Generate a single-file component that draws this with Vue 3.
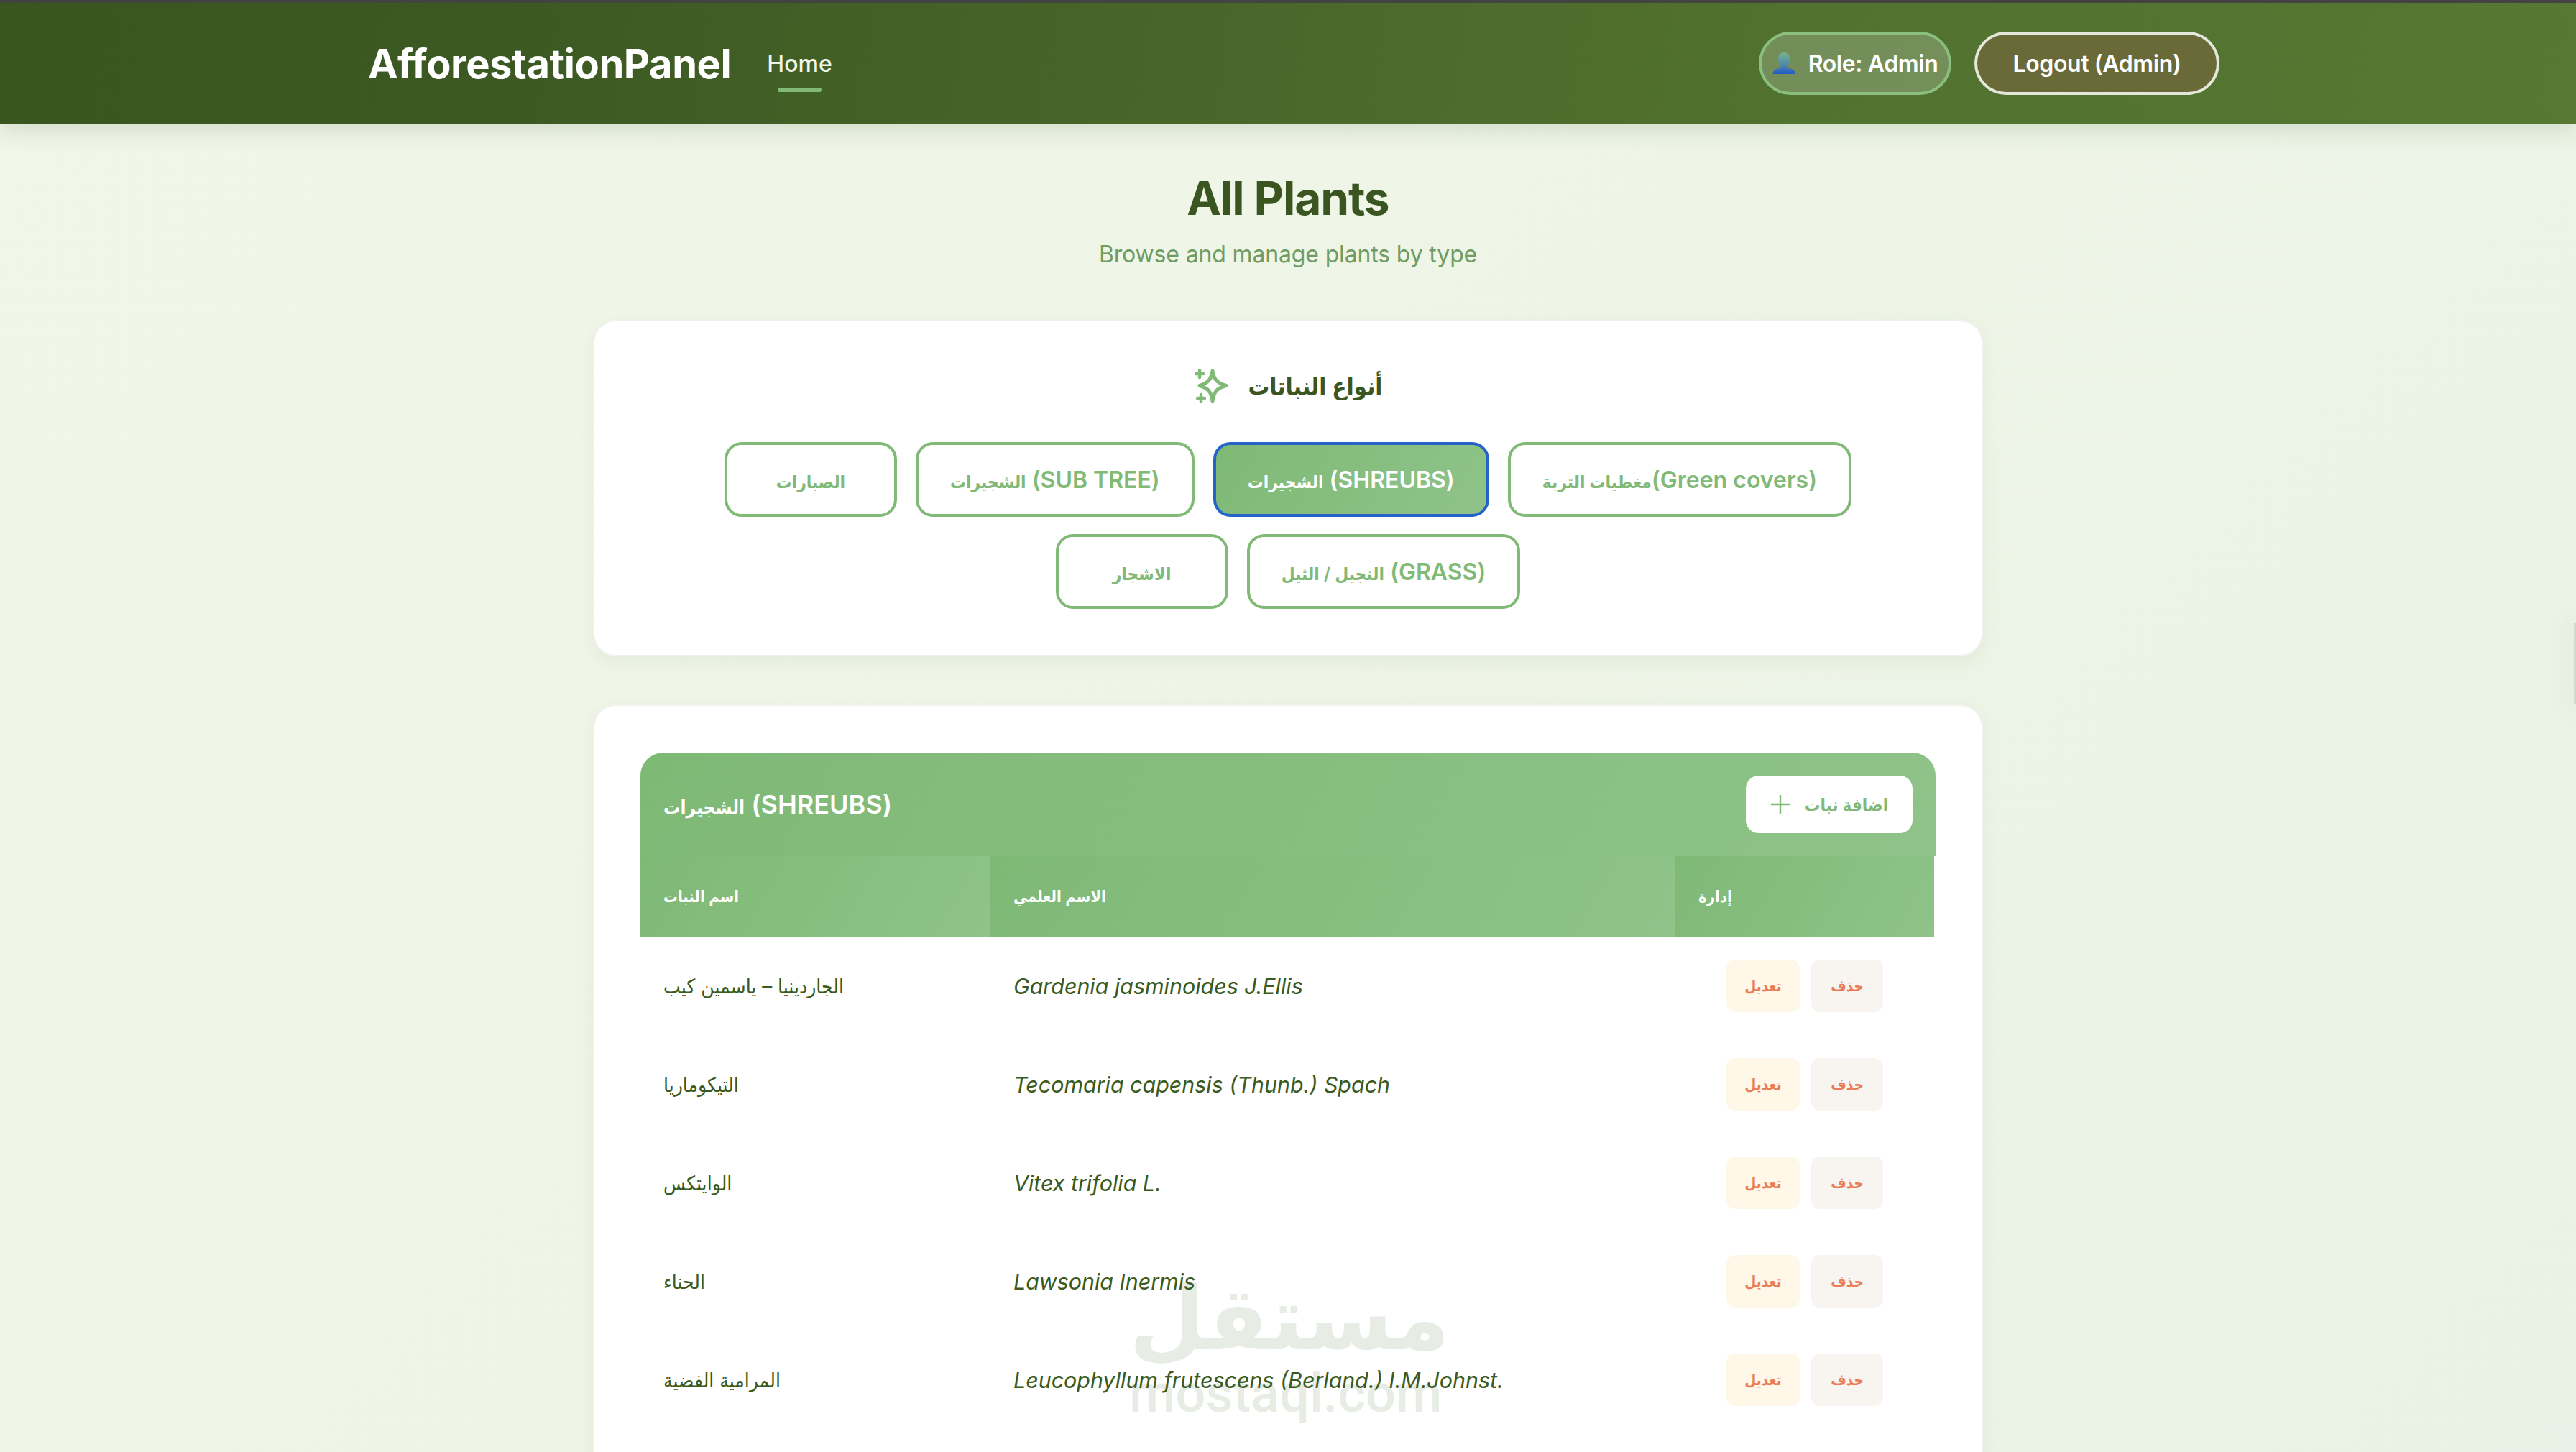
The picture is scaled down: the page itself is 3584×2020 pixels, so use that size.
<script setup>
const tabs = [
  { ar: 'الصبارات', en: '', active: false },
  { ar: 'الشجيرات', en: ' (SUB TREE)', active: false },
  { ar: 'الشجيرات', en: ' (SHREUBS)', active: true },
  { ar: 'مغطيات التربة', en: '(Green covers)', active: false },
  { ar: 'الاشجار', en: '', active: false },
  { ar: 'النجيل / الثيل', en: ' (GRASS)', active: false }
]
const plants = [
  { name: 'الجاردينيا – ياسمين كيب', sci: 'Gardenia jasminoides J.Ellis' },
  { name: 'التيكوماريا', sci: 'Tecomaria capensis (Thunb.) Spach' },
  { name: 'الوايتكس', sci: 'Vitex trifolia L.' },
  { name: 'الحناء', sci: 'Lawsonia Inermis' },
  { name: 'المرامية الفضية', sci: 'Leucophyllum frutescens (Berland.) I.M.Johnst.' }
]
</script>

<template>
  <div class="page">
    <div class="topline"></div>
    <header class="header">
      <div class="brand">AfforestationPanel</div>
      <nav class="nav"><a class="nav-link">Home</a></nav>
      <div class="spacer"></div>
      <div class="role">
        <svg class="role-icon" viewBox="0 0 32 32">
          <defs>
            <linearGradient id="bust" x1="0" y1="0" x2="0" y2="1">
              <stop offset="0" stop-color="#79b38a" />
              <stop offset="0.6" stop-color="#4a86b0" />
              <stop offset="1" stop-color="#2459c4" />
            </linearGradient>
          </defs>
          <path fill="url(#bust)" d="M16 1c5 0 8.500 4 8.500 9.500 0 4-1.800 7-3.800 9 0 2 1 2.800 4.500 4 4 1.300 6.300 3 6.800 7.500H.500c.500-4.500 2.800-6.200 6.800-7.500 3.500-1.200 4.500-2 4.500-4-2-2-3.800-5-3.800-9C8 5 11 1 16 1z" />
        </svg>
        <span>Role: Admin</span>
      </div>
      <button class="logout">Logout (Admin)</button>
    </header>

    <main class="main">
      <h1 class="title">All Plants</h1>
      <p class="subtitle">Browse and manage plants by type</p>

      <section class="card types">
        <div class="types-head">
          <svg class="sparkle" viewBox="0 0 48 48" fill="none" stroke="#81b977" stroke-linecap="round" stroke-linejoin="round">
            <path stroke-width="5" d="M25 3C27 15 31 20 44 23.500 31 27 27 32 25 45 23 32 19 27 7 23.500 19 20 23 15 25 3Z" />
            <path stroke-width="4.500" d="M7 2v10M2 7h10M9 36v10M4 41h10" />
          </svg>
          <h2 class="types-title" dir="rtl">أنواع النباتات</h2>
        </div>
        <div class="tabs">
          <button v-for="t in tabs" :key="t.ar + t.en" class="tab" :class="{ active: t.active }">
            <span class="ar">{{ t.ar }}</span><span>{{ t.en }}</span>
          </button>
        </div>
      </section>

      <section class="card list">
        <div class="list-head">
          <div class="list-title"><span class="ar">الشجيرات</span> (SHREUBS)</div>
          <button class="add">
            <svg class="plus" viewBox="0 0 28 28" fill="none" stroke="#81b977" stroke-width="2.400"><path d="M14 1v26M1 14h26" /></svg>
            <span dir="rtl">اضافة نبات</span>
          </button>
        </div>
        <div class="row thead">
          <div class="cell c1 th">اسم النبات</div>
          <div class="cell c2 th">الاسم العلمي</div>
          <div class="cell c3 th">إدارة</div>
        </div>
        <div v-for="p in plants" :key="p.sci" class="row body-row">
          <div class="cell c1 name" dir="rtl">{{ p.name }}</div>
          <div class="cell c2 sci">{{ p.sci }}</div>
          <div class="cell c3 actions">
            <button class="act edit">تعديل</button>
            <button class="act del">حذف</button>
          </div>
        </div>
      </section>
    </main>

    <div class="watermark" aria-hidden="true">
      <div class="wm-ar">مستقل</div>
      <div class="wm-en">mostaql.com</div>
    </div>
    <div class="edge-tab"></div>
  </div>
</template>

<style>
html, body { margin: 0; padding: 0; background: #eff5e8; }
</style>

<style scoped>
* { box-sizing: border-box; }
.page {
  position: relative;
  width: 3584px;
  height: 2020px;
  overflow: hidden;
  font-family: Inter, "DejaVu Sans Condensed", "DejaVu Sans", sans-serif;
  background: linear-gradient(135deg, #f1f6e8 0%, #eef5e7 50%, #e9f2e6 100%);
  color: #3a5a20;
}
.topline { height: 4px; background: #444; }
.header {
  height: 168px;
  display: flex;
  align-items: center;
  padding: 0 496px 0 512px;
  background: linear-gradient(100deg, #3a5520 0%, #3d5923 20%, #527230 70%, #567832 100%);
  box-shadow: 0 8px 30px rgba(58, 85, 32, 0.16);
  position: relative;
}
.brand { font-size: 56px; font-weight: 700; color: #fff; letter-spacing: -0.4px; padding-top: 2px; }
.nav { margin-left: 50px; }
.nav-link { position: relative; font-size: 32px; font-weight: 500; color: #f0f5ea; display: block; }
.nav-link::after {
  content: "";
  position: absolute;
  left: 15px;
  right: 15px;
  bottom: -20px;
  height: 6px;
  border-radius: 3px;
  background: #81b977;
}
.spacer { flex: 1; }
.role {
  height: 88px;
  width: 268px;
  border: 4px solid #8abf80;
  border-radius: 44px;
  background: rgba(255, 255, 255, 0.2);
  color: #fff;
  font-size: 32px;
  font-weight: 600;
  letter-spacing: -0.4px;
  display: flex;
  align-items: center;
  justify-content: center;
  gap: 18px;
  white-space: nowrap;
}
.role-icon { width: 32px; height: 32px; flex: none; }
.logout {
  margin-left: 32px;
  height: 88px;
  width: 341px;
  border: 4px solid #e4e8dc;
  border-radius: 44px;
  background: #6a6a38;
  color: #fff;
  font-family: inherit;
  font-size: 32px;
  font-weight: 600;
  letter-spacing: -0.4px;
}
.main { width: 1934px; margin: 0 auto; display: flex; flex-direction: column; align-items: stretch; }
.title {
  margin: 66px 0 0;
  text-align: center;
  font-size: 64px;
  line-height: 76px;
  font-weight: 700;
  letter-spacing: -1.1px;
  color: #3a5520;
}
.subtitle {
  margin: 20px 0 0;
  text-align: center;
  font-size: 32px;
  line-height: 40px;
  letter-spacing: -0.15px;
  color: #6e9c63;
}
.card {
  background: #fff;
  border: 2px solid #f0f3ec;
  border-radius: 32px;
  box-shadow: 0 8px 24px rgba(58, 85, 32, 0.06);
}
.types { margin-top: 71px; height: 468px; padding: 66px 64px 0; }
.types-head { height: 48px; display: flex; align-items: center; justify-content: center; gap: 26px; }
.sparkle { width: 48px; height: 48px; flex: none; margin-left: 2px; }
.types-title { margin: 0; font-size: 33px; font-weight: 700; color: #3a5520; }
.tabs {
  margin-top: 54px;
  display: flex;
  flex-wrap: wrap;
  justify-content: center;
  gap: 24px 26px;
}
.tab {
  height: 104px;
  padding: 0 44px;
  min-width: 240px;
  background: #fff;
  border: 4px solid #81b977;
  border-radius: 24px;
  color: #81b977;
  font-family: inherit;
  font-size: 32px;
  font-weight: 600;
  white-space: nowrap;
}
.tab .ar { font-size: 24.300px; }
.tab.active {
  color: #fff;
  border-color: #2563c9;
  background: linear-gradient(120deg, #7fb976, #8fc389);
}
.list { margin-top: 67px; padding: 64px; height: 1200px; }
.list-head {
  height: 144px;
  margin-top: 1px;
  display: flex;
  align-items: center;
  justify-content: space-between;
  padding: 0 32px;
  background: linear-gradient(120deg, #7fb976, #8fc389);
  border-radius: 32px 32px 0 0;
}
.list-title { font-size: 36px; font-weight: 600; color: #fff; }
.list-title .ar { font-size: 26px; }
.add {
  width: 232px;
  height: 80px;
  display: flex;
  align-items: center;
  justify-content: center;
  gap: 20px;
  border: 0;
  border-radius: 18px;
  background: #fff;
  color: #81b977;
  font-family: inherit;
  font-size: 24px;
  font-weight: 600;
}
.plus { width: 28px; height: 28px; flex: none; }
.row { display: grid; grid-template-columns: 487px 953px 360px; }
.thead { height: 112px; }
.cell { display: flex; align-items: center; padding: 0 32px; }
.th { color: #fff; font-size: 22px; font-weight: 600; background: linear-gradient(120deg, #7fb976, #8fc389); }
.body-row { height: 137px; }
.name { justify-content: flex-end; font-size: 28px; color: #3a5a20; }
.sci { font-size: 30.400px; font-style: italic; color: #3a5a20; }
.actions { gap: 16px; padding-left: 71px; }
.act {
  height: 73px;
  border: 0;
  border-radius: 12px;
  font-family: inherit;
  font-size: 20.500px;
  font-weight: 600;
  color: #ea7d55;
}
.edit { width: 102px; background: #fff8e8; }
.del { width: 100px; background: #f8f4f0; }
.watermark {
  position: absolute;
  left: 1571px;
  top: 1766px;
  width: 430px;
  text-align: center;
  color: #3f6a34;
  opacity: 0.12;
  pointer-events: none;
}
.wm-ar { font-family: "DejaVu Sans", sans-serif; font-size: 122px; font-weight: 700; line-height: 138px; white-space: nowrap; }
.wm-en { font-family: Roboto, sans-serif; font-size: 74px; font-weight: 500; line-height: 70px; white-space: nowrap; }
.edge-tab {
  position: absolute;
  right: 0;
  top: 867px;
  width: 3px;
  height: 113px;
  background: rgba(90, 110, 90, 0.18);
  box-shadow: 0 0 30px 14px rgba(90, 110, 90, 0.04);
}
</style>
